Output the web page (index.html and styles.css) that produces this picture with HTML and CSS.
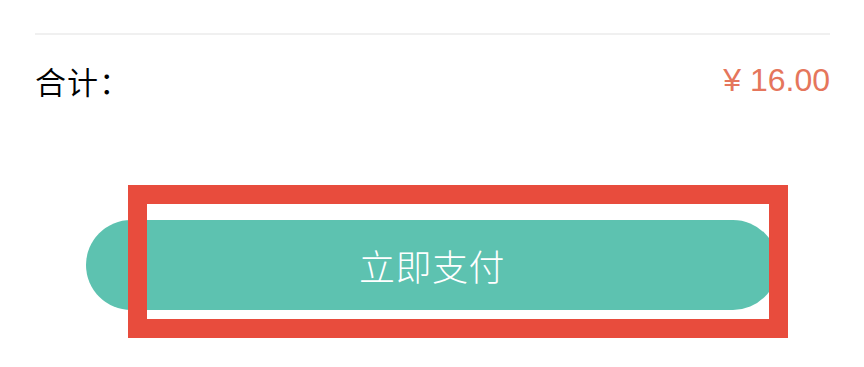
FILE: index.html
```html
<!DOCTYPE html>
<html lang="zh-CN">
<head>
<meta charset="utf-8">
<title>支付</title>
<link rel="stylesheet" href="styles.css">
</head>
<body>
<div class="page">
  <div class="divider"></div>
  <div class="total-row">
    <span class="label">合计：</span>
    <span class="price">¥ 16.00</span>
  </div>
  <div class="action">
    <button class="pay-btn" type="button">立即支付</button>
    <div class="highlight"></div>
  </div>
</div>
</body>
</html>
```
FILE: styles.css
```css
html, body {
  margin: 0;
  padding: 0;
  background: #ffffff;
}
.page {
  width: 864px;
  min-height: 367px;
  box-sizing: border-box;
  padding: 33px 34px 0 35px;
  font-family: "Noto Sans CJK SC", "Noto Sans", sans-serif;
}
.divider {
  height: 2px;
  background: #f0f0f0;
}
.total-row {
  height: 90px;
  display: flex;
  align-items: center;
  justify-content: space-between;
}
.label {
  font-size: 31px;
  font-weight: 350;
  color: #000000;
  line-height: 1;
  letter-spacing: 1px;
}
.price {
  font-family: "Liberation Sans", Arial, sans-serif;
  font-size: 32px;
  color: #e5765c;
  line-height: 1;
}
.action {
  position: relative;
  margin-top: 95px;
  display: flex;
  justify-content: center;
}
.pay-btn {
  width: 692px;
  height: 90px;
  border: none;
  border-radius: 45px;
  background: #5dc2b0;
  color: #ffffff;
  font-family: "Noto Sans CJK SC", sans-serif;
  font-size: 36px;
  font-weight: 300;
  letter-spacing: 0.5px;
  padding: 0;
  margin-left: -1px;
}
.highlight {
  position: absolute;
  left: 93px;
  top: -35px;
  width: 660px;
  height: 153px;
  box-sizing: border-box;
  border: 19px solid #e84c3d;
}
```
